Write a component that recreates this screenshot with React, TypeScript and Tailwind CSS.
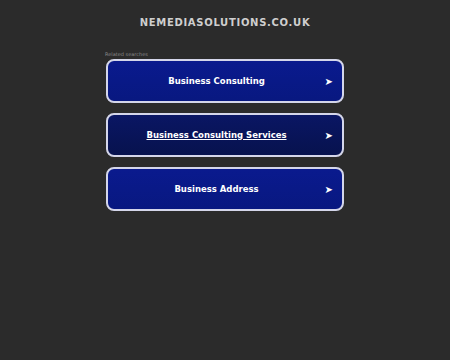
const links = [
  { label: "Business Consulting", active: false },
  { label: "Business Consulting Services", active: true },
  { label: "Business Address", active: false },
];

export default function App() {
  return (
    <div className="min-h-[360px] w-full bg-[#2b2b2b] font-['DejaVu_Sans',sans-serif]">
      <div className="flex flex-col items-center pt-[16px]">
        <h1 className="text-[10px] font-bold tracking-[0.7px] text-[#cfcfcf] leading-[13px]">
          NEMEDIASOLUTIONS.CO.UK
        </h1>
        <div className="mt-[22px] w-[238px]">
          <div className="-ml-[1px] text-[5px] leading-[6px] text-[#8a8a8a]">Related searches</div>
          <div className="mt-[2px] flex flex-col gap-[10px]">
            {links.map(({ label, active }) => (
              <a
                key={label}
                href="#"
                className={`relative flex h-[44px] items-center justify-center rounded-[8px] border-2 border-[#d4d6ea] pr-[17px] text-[8.5px] font-bold text-white ${
                  active
                    ? "bg-gradient-to-b from-[#0a1664] to-[#07124e] underline"
                    : "bg-gradient-to-b from-[#0a1a8e] to-[#081880]"
                }`}
              >
                {label}
                <span className="absolute right-[9px] top-1/2 -translate-y-1/2 text-[10px] no-underline">➤</span>
              </a>
            ))}
          </div>
        </div>
      </div>
    </div>
  );
}
